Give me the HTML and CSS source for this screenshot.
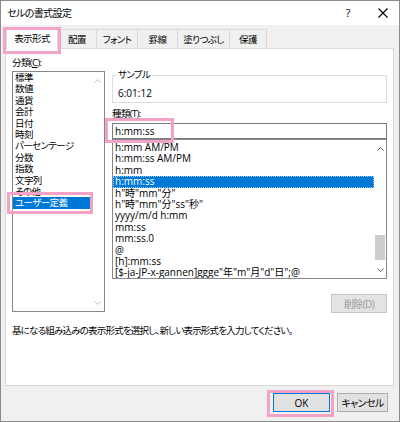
FILE: index.html
```html
<!DOCTYPE html>
<html lang="ja">
<head>
  <meta charset="UTF-8" />
  <title>セルの書式設定</title>
  <link rel="stylesheet" href="styles.css">
</head>
<body>
  <div class="window">
    <div class="titlebar">
      <span class="title">セルの書式設定</span>
      <span class="title-btn help">?</span>
      <span class="title-btn close">
        <svg width="10" height="10" viewBox="0 0 10 10"><path d="M0.5 0.5L9.5 9.5M9.5 0.5L0.5 9.5" stroke="#000" stroke-width="1.1" fill="none"/></svg>
      </span>
    </div>

    <div class="client">
      <div class="tabs">
        <div class="tab active">表示形式</div>
        <div class="tab w-haichi">配置</div>
        <div class="tab w-font">フォント</div>
        <div class="tab w-keisen">罫線</div>
        <div class="tab w-nuri">塗りつぶし</div>
        <div class="tab w-hogo">保護</div>
      </div>

      <div class="panel">
        <div class="panel-main">
          <div class="category">
            <div class="field-label">分類(<u>C</u>):</div>
            <div class="listbox cat-list">
              <ul class="items">
                <li>標準</li>
                <li>数値</li>
                <li>通貨</li>
                <li>会計</li>
                <li>日付</li>
                <li>時刻</li>
                <li>パーセンテージ</li>
                <li>分数</li>
                <li>指数</li>
                <li>文字列</li>
                <li>その他</li>
                <li class="selected">ユーザー定義</li>
              </ul>
              <div class="scrollbar disabled">
                <span class="arrow"><svg width="7" height="4" viewBox="0 0 7 4"><polyline points="0.5,3.5 3.5,0.5 6.5,3.5" /></svg></span>
                <span class="track"></span>
                <span class="arrow"><svg width="7" height="4" viewBox="0 0 7 4"><polyline points="0.5,0.5 3.5,3.5 6.5,0.5" /></svg></span>
              </div>
            </div>
          </div>

          <div class="format">
            <fieldset class="sample">
              <legend>サンプル</legend>
              <div class="sample-value">6:01:12</div>
            </fieldset>
            <div class="field-label type-label">種類(<u>T</u>):</div>
            <div class="text-input">h:mm:ss</div>
            <div class="listbox type-list">
              <ul class="items">
                <li>h:mm AM/PM</li>
                <li>h:mm:ss AM/PM</li>
                <li>h:mm</li>
                <li class="selected focus">h:mm:ss</li>
                <li>h"時"mm"分"</li>
                <li>h"時"mm"分"ss"秒"</li>
                <li>yyyy/m/d h:mm</li>
                <li>mm:ss</li>
                <li>mm:ss.0</li>
                <li>@</li>
                <li>[h]:mm:ss</li>
                <li>[$-ja-JP-x-gannen]ggge"年"m"月"d"日";@</li>
              </ul>
              <div class="scrollbar">
                <span class="arrow"><svg width="7" height="4" viewBox="0 0 7 4"><polyline points="0.5,3.5 3.5,0.5 6.5,3.5" /></svg></span>
                <span class="track"><span class="thumb"></span></span>
                <span class="arrow"><svg width="7" height="4" viewBox="0 0 7 4"><polyline points="0.5,0.5 3.5,3.5 6.5,0.5" /></svg></span>
              </div>
            </div>
            <div class="delete-row">
              <button class="btn btn-disabled" disabled>削除(D)</button>
            </div>
          </div>
        </div>
        <p class="hint">基になる組み込みの表示形式を選択し、新しい表示形式を入力してください。</p>
      </div>

      <div class="footer">
        <button class="btn btn-default">OK</button>
        <button class="btn btn-cancel">キャンセル</button>
      </div>
    </div>

    <!-- pink annotation boxes -->
    <span class="mark mark-tab"></span>
    <span class="mark mark-user"></span>
    <span class="mark mark-input"></span>
    <span class="mark mark-ok"></span>
  </div>
</body>
</html>
```

FILE: styles.css
```css
* {
  box-sizing: border-box;
}
body {
  margin: 0;
  font-family: "Open Sans", "Noto Sans CJK JP", sans-serif;
  font-size: 10px;
  line-height: 12px;
  color: #000;
  font-feature-settings: "palt";
}
u {
  text-decoration: underline;
  text-underline-offset: 1px;
}
/* japanese labels run narrower than the latin text */
.title,
.tab,
.field-label,
.cat-list,
.sample legend,
.btn-disabled,
.btn-cancel {
  font-size: 9.5px;
  letter-spacing: -0.6px;
}
.window {
  position: relative;
  width: 400px;
  height: 422px;
  border: 1px solid #8c8c8c;
  background: #f0f0f0;
  display: flex;
  flex-direction: column;
}
.titlebar {
  height: 24px;
  background: #fff;
  display: flex;
  align-items: center;
  padding: 0 2px 0 6px;
}
.title {
  flex: 1;
  font-size: 10px;
}
.title-btn {
  width: 28px;
  display: flex;
  justify-content: center;
  align-items: center;
}
.help {
  margin-right: 7px;
  font-size: 11px;
}
.client {
  flex: 1;
  display: flex;
  flex-direction: column;
  padding: 2px 5px 0 4px;
}
.tabs {
  display: flex;
  align-items: flex-end;
  height: 21px;
  padding-left: 1px;
}
.tab {
  height: 19px;
  border: 1px solid #d9d9d9;
  border-left: none;
  border-bottom: none;
  background: #f0f0f0;
  display: flex;
  justify-content: center;
  align-items: center;
  padding-top: 1px;
}
.tab.active {
  position: relative;
  z-index: 1;
  width: 52px;
  height: 22px;
  margin-bottom: -1px;
  border-left: 1px solid #d9d9d9;
  background: #fff;
}
.w-haichi { width: 39px; }
.w-font { width: 41px; }
.w-keisen { width: 40px; }
.w-nuri { width: 52px; }
.w-hogo { width: 37px; }
.panel {
  width: 389px;
  height: 338px;
  background: #fff;
  border: 1px solid #d9d9d9;
  padding: 8px 6px 0 6px;
}
.panel-main {
  display: grid;
  grid-template-columns: 93px 1fr;
  column-gap: 7px;
  align-items: start;
}
.field-label {
  height: 14px;
}
.listbox {
  display: flex;
  border: 1px solid #828790;
  background: #fff;
  overflow: hidden;
}
.cat-list {
  height: 241px;
}
.items {
  list-style: none;
  margin: 0;
  padding: 0;
  flex: 1;
  line-height: 11.4px;
  white-space: nowrap;
  overflow: hidden;
}
.items li {
  padding-left: 2px;
  height: 11.4px;
}
.items li.selected {
  background: #0078d7;
  color: #fff;
}
.items li.focus {
  outline: 1px dotted #9cc7f0;
  outline-offset: -1px;
}
.scrollbar {
  width: 13px;
  display: flex;
  flex-direction: column;
  background: #fff;
}
.arrow {
  height: 17px;
  display: flex;
  justify-content: center;
  align-items: center;
}
.arrow svg polyline {
  fill: none;
  stroke: #606060;
  stroke-width: 1;
}
.scrollbar.disabled .arrow svg polyline {
  stroke: #c0c0c0;
}
.track {
  flex: 1;
  display: flex;
  flex-direction: column;
  justify-content: flex-end;
}
.thumb {
  height: 25px;
  margin: 0 1px 1px 1px;
  background: #cdcdcd;
}
.format {
  margin-top: 12px;
}
.sample {
  margin: 0;
  padding: 6px 6px 3px 3px;
  border: 1px solid #dcdcdc;
}
.sample legend {
  padding: 0 2px;
}
.sample-value {
  padding-left: 2px;
}
.type-label {
  margin-top: 5px;
  height: 12px;
}
.text-input {
  margin-top: 3px;
  height: 16px;
  border: 1px solid #7a7a7a;
  padding-left: 2px;
  line-height: 14px;
}
.type-list {
  height: 140px;
}
.type-list .items {
  padding-top: 2px;
}
.type-list .scrollbar {
  width: 12px;
}
.delete-row {
  margin-top: 15px;
  display: flex;
  justify-content: flex-end;
}
.btn {
  font-family: inherit;
  font-size: 10px;
  font-feature-settings: "palt";
  height: 19px;
  padding: 0;
  border: 1px solid #adadad;
  background: #e1e1e1;
  color: #000;
}
.btn-disabled {
  width: 56px;
  background: #e3e3e3;
  border-color: #c6c6c6;
  color: #9a9a9a;
}
.btn-default {
  width: 57px;
  border-color: #0078d7;
}
.hint {
  margin: 12px 0 0 0;
  font-size: 9.5px;
  letter-spacing: -0.8px;
}
.footer {
  display: flex;
  justify-content: flex-end;
  gap: 7px;
  padding: 7px 6px 0 0;
}
.footer .btn {
  width: 51px;
}
.footer .btn-default {
  width: 57px;
}
.mark {
  position: absolute;
  border: 3px solid #f4a3c8;
  pointer-events: none;
  z-index: 2;
}
.mark-tab {
  left: 2px;
  top: 26px;
  width: 58px;
  height: 27px;
}
.mark-user {
  left: 6px;
  top: 191px;
  width: 86px;
  height: 22px;
}
.mark-input {
  left: 104px;
  top: 117px;
  width: 69px;
  height: 25px;
}
.mark-ok {
  left: 266px;
  top: 389px;
  width: 67px;
  height: 27px;
}
```
